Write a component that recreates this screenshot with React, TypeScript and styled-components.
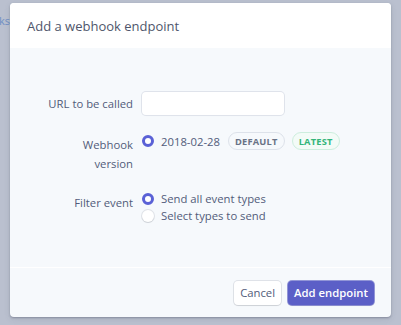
import { FC } from "react";
import styled, { createGlobalStyle } from "styled-components";

const GlobalStyle = createGlobalStyle`
    html, body {
        margin: 0;
        padding: 0;
    }
    body {
        width: 401px;
        height: 325px;
        overflow: hidden;
        background: #bac0cf;
        font-family: "Open Sans", "Noto Sans", sans-serif;
    }
`;

const Page = styled.div`
    display: flex;
    height: 325px;
`;

const Backdrop = styled.div`
    width: 10px;
    overflow: hidden;
    padding-top: 13px;
    color: #6f8fc4;
    font-size: 11px;
    white-space: nowrap;
    direction: rtl;
`;

const Modal = styled.div`
    margin-top: 3px;
    width: 381px;
    height: 314px;
    border-radius: 4px;
    background: #f6f9fc;
    box-shadow: 0 1px 2px rgba(60, 66, 87, 0.35), 0 2px 6px rgba(60, 66, 87, 0.12);
    display: flex;
    flex-direction: column;
    overflow: hidden;
`;

const Header = styled.div`
    height: 45px;
    background: #fff;
    display: flex;
    align-items: center;
    padding-left: 17px;
    color: #4f566b;
    font-size: 13px;
`;

const Body = styled.div`
    padding: 44px 20px 0;
    height: 175px;
    display: flex;
    flex-direction: column;
    gap: 17px;
    border-bottom: 1px solid #fff;
`;

const Row = styled.div<{ $center?: boolean }>`
    display: grid;
    grid-template-columns: 103px 1fr;
    column-gap: 9px;
    align-items: ${(p) => (p.$center ? "center" : "start")};
`;

const Label = styled.div<{ $center?: boolean }>`
    text-align: right;
    color: #525c7a;
    font-size: 11.3px;
    line-height: 19px;
    padding-top: ${(p) => (p.$center ? "0" : "3px")};
`;

const Input = styled.input`
    width: 142px;
    height: 23px;
    box-sizing: border-box;
    border: none;
    border-radius: 4px;
    background: #fff;
    box-shadow: 0 0 0 1px #dfe3eb, 0 1px 1px rgba(0, 0, 0, 0.04);
`;

const Options = styled.div`
    display: flex;
    flex-direction: column;
`;

const Option = styled.div<{ $tall?: boolean }>`
    display: flex;
    align-items: center;
    gap: 7px;
    height: ${(p) => (p.$tall ? "18px" : "17px")};
    color: #525c7a;
    font-size: 11.3px;
`;

const Radio = styled.span<{ $checked?: boolean }>`
    width: 12px;
    height: 12px;
    border-radius: 50%;
    box-sizing: border-box;
    flex-shrink: 0;
    background: #fff;
    border: ${(p) => (p.$checked ? "3px solid #5a61d6" : "none")};
    box-shadow: ${(p) =>
        p.$checked ? "none" : "0 0 0 1px rgba(60, 66, 87, 0.12), 0 1px 1px rgba(0,0,0,0.08)"};
`;

const Badge = styled.span<{ $green?: boolean }>`
    display: inline-flex;
    align-items: center;
    height: 18px;
    box-sizing: border-box;
    padding: 0 6px;
    border-radius: 9px;
    font-size: 9.3px;
    font-weight: 700;
    letter-spacing: 0.2px;
    color: ${(p) => (p.$green ? "#33b57a" : "#697386")};
    border: 1px solid ${(p) => (p.$green ? "#cdeede" : "#dde2ea")};
    background: ${(p) => (p.$green ? "#f3fbf7" : "#f6f9fc")};
`;

const Version = styled.span`
    margin-right: 1px;
`;

const Footer = styled.div`
    flex: 1;
    display: flex;
    justify-content: flex-end;
    align-items: center;
    gap: 7px;
    padding-right: 17px;
`;

const Button = styled.button<{ $primary?: boolean }>`
    height: 24px;
    padding: 0 6px;
    border: none;
    border-radius: 4px;
    font-family: inherit;
    font-size: 11.3px;
    font-weight: ${(p) => (p.$primary ? 600 : 400)};
    color: ${(p) => (p.$primary ? "#fff" : "#525c7a")};
    background: ${(p) => (p.$primary ? "#5b5fc7" : "#fff")};
    box-shadow: ${(p) =>
        p.$primary
            ? "0 0 0 1px rgba(80, 84, 190, 0.6), 0 1px 1px rgba(0,0,0,0.1)"
            : "0 0 0 1px rgba(60, 66, 87, 0.12), 0 1px 1px rgba(0,0,0,0.08)"};
`;

const App: FC = () => {
    return (
        <Page>
            <GlobalStyle />
            <Backdrop>Webhooks</Backdrop>
            <Modal>
                <Header>Add a webhook endpoint</Header>
                <Body>
                    <Row $center>
                        <Label $center>URL to be called</Label>
                        <Input />
                    </Row>
                    <Row>
                        <Label>
                            Webhook
                            <br />
                            version
                        </Label>
                        <Options>
                            <Option $tall>
                                <Radio $checked />
                                <Version>2018-02-28</Version>
                                <Badge>DEFAULT</Badge>
                                <Badge $green>LATEST</Badge>
                            </Option>
                        </Options>
                    </Row>
                    <Row>
                        <Label>Filter event</Label>
                        <Options>
                            <Option>
                                <Radio $checked />
                                Send all event types
                            </Option>
                            <Option>
                                <Radio />
                                Select types to send
                            </Option>
                        </Options>
                    </Row>
                </Body>
                <Footer>
                    <Button>Cancel</Button>
                    <Button $primary>Add endpoint</Button>
                </Footer>
            </Modal>
        </Page>
    );
};

export default App;
